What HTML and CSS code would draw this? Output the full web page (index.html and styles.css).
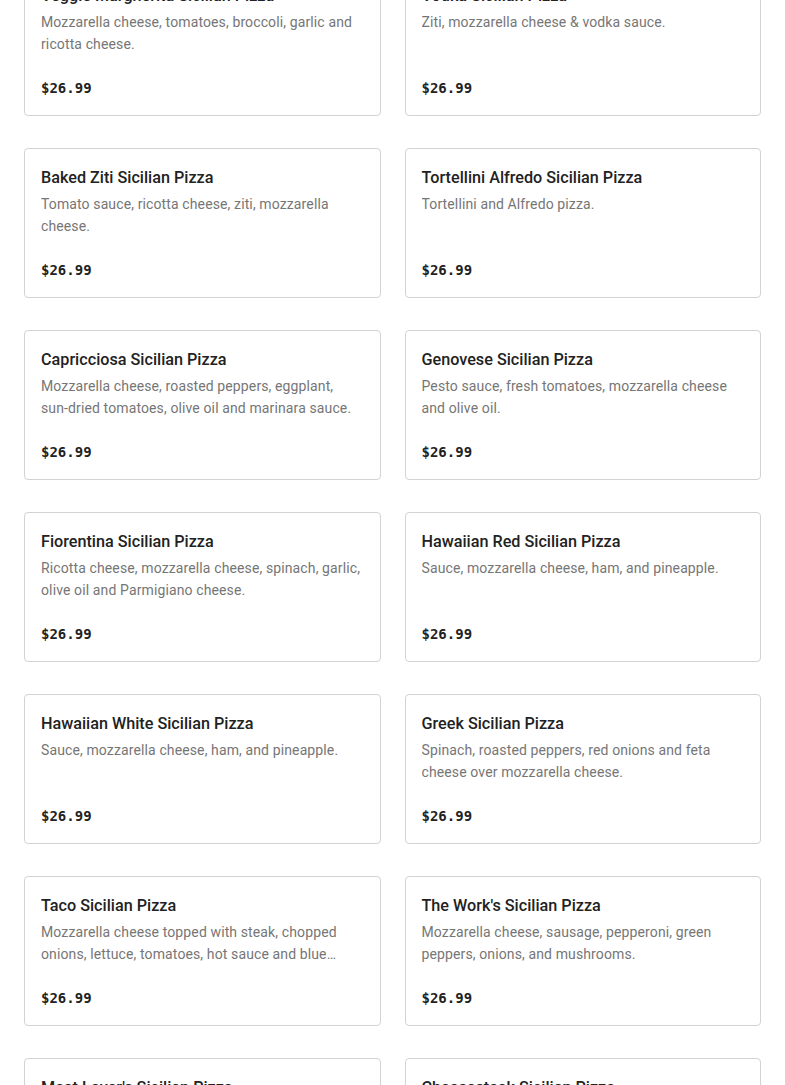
FILE: index.html
```html
<!DOCTYPE html>
<html lang="en">
<head>
<meta charset="utf-8">
<title>Sicilian Pizza</title>
<link rel="stylesheet" href="styles.css">
</head>
<body>
<main class="menu">
  <div class="card"><h3 class="title">Veggie Margherita Sicilian Pizza</h3><p class="desc">Mozzarella cheese, tomatoes, broccoli, garlic and ricotta cheese.</p><div class="price">$26.99</div></div>
  <div class="card"><h3 class="title">Vodka Sicilian Pizza</h3><p class="desc">Ziti, mozzarella cheese &amp; vodka sauce.</p><div class="price">$26.99</div></div>
  <div class="card"><h3 class="title">Baked Ziti Sicilian Pizza</h3><p class="desc">Tomato sauce, ricotta cheese, ziti, mozzarella cheese.</p><div class="price">$26.99</div></div>
  <div class="card"><h3 class="title">Tortellini Alfredo Sicilian Pizza</h3><p class="desc">Tortellini and Alfredo pizza.</p><div class="price">$26.99</div></div>
  <div class="card"><h3 class="title">Capricciosa Sicilian Pizza</h3><p class="desc">Mozzarella cheese, roasted peppers, eggplant, sun-dried tomatoes, olive oil and marinara sauce.</p><div class="price">$26.99</div></div>
  <div class="card"><h3 class="title">Genovese Sicilian Pizza</h3><p class="desc">Pesto sauce, fresh tomatoes, mozzarella cheese and olive oil.</p><div class="price">$26.99</div></div>
  <div class="card"><h3 class="title">Fiorentina Sicilian Pizza</h3><p class="desc">Ricotta cheese, mozzarella cheese, spinach, garlic, olive oil and Parmigiano cheese.</p><div class="price">$26.99</div></div>
  <div class="card"><h3 class="title">Hawaiian Red Sicilian Pizza</h3><p class="desc">Sauce, mozzarella cheese, ham, and pineapple.</p><div class="price">$26.99</div></div>
  <div class="card"><h3 class="title">Hawaiian White Sicilian Pizza</h3><p class="desc">Sauce, mozzarella cheese, ham, and pineapple.</p><div class="price">$26.99</div></div>
  <div class="card"><h3 class="title">Greek Sicilian Pizza</h3><p class="desc">Spinach, roasted peppers, red onions and feta cheese over mozzarella cheese.</p><div class="price">$26.99</div></div>
  <div class="card"><h3 class="title">Taco Sicilian Pizza</h3><p class="desc">Mozzarella cheese topped with steak, chopped onions, lettuce, tomatoes, hot sauce and blue cheese dressing.</p><div class="price">$26.99</div></div>
  <div class="card"><h3 class="title">The Work's Sicilian Pizza</h3><p class="desc">Mozzarella cheese, sausage, pepperoni, green peppers, onions, and mushrooms.</p><div class="price">$26.99</div></div>
  <div class="card"><h3 class="title">Meat Lover's Sicilian Pizza</h3><p class="desc">Pepperoni, sausage, meatballs, ham and bacon.</p><div class="price">$26.99</div></div>
  <div class="card"><h3 class="title">Cheesesteak Sicilian Pizza</h3><p class="desc">Steak, onions and mozzarella cheese.</p><div class="price">$26.99</div></div>
</main>
</body>
</html>
```
FILE: styles.css
```css
html, body {
  margin: 0;
  padding: 0;
  background: #ffffff;
  overflow: hidden;
}
body {
  font-family: "Roboto", "Liberation Sans", sans-serif;
  color: #222222;
}
.menu {
  display: grid;
  grid-template-columns: 1fr 1fr;
  column-gap: 24px;
  row-gap: 32px;
  padding: 0 24px;
  margin-top: -34px;
}
.card {
  border: 1px solid #d3d3d3;
  border-radius: 4px;
  padding: 17px 16px 17px 16px;
  height: 150px;
  box-sizing: border-box;
  display: flex;
  flex-direction: column;
}
.title {
  margin: 0;
  font-size: 16.2px;
  font-weight: 500;
  line-height: 23px;
  color: #222222;
}
.desc {
  margin: 4px 0 0 0;
  font-size: 14px;
  line-height: 22px;
  color: #767676;
  letter-spacing: 0.12px;
  height: 44px;
  display: -webkit-box;
  -webkit-line-clamp: 2;
  -webkit-box-orient: vertical;
  overflow: hidden;
}
.price {
  margin-top: auto;
  font-family: "DejaVu Sans Mono", "Liberation Mono", monospace;
  font-weight: bold;
  font-size: 14px;
  line-height: 20px;
  color: #222222;
}
```
